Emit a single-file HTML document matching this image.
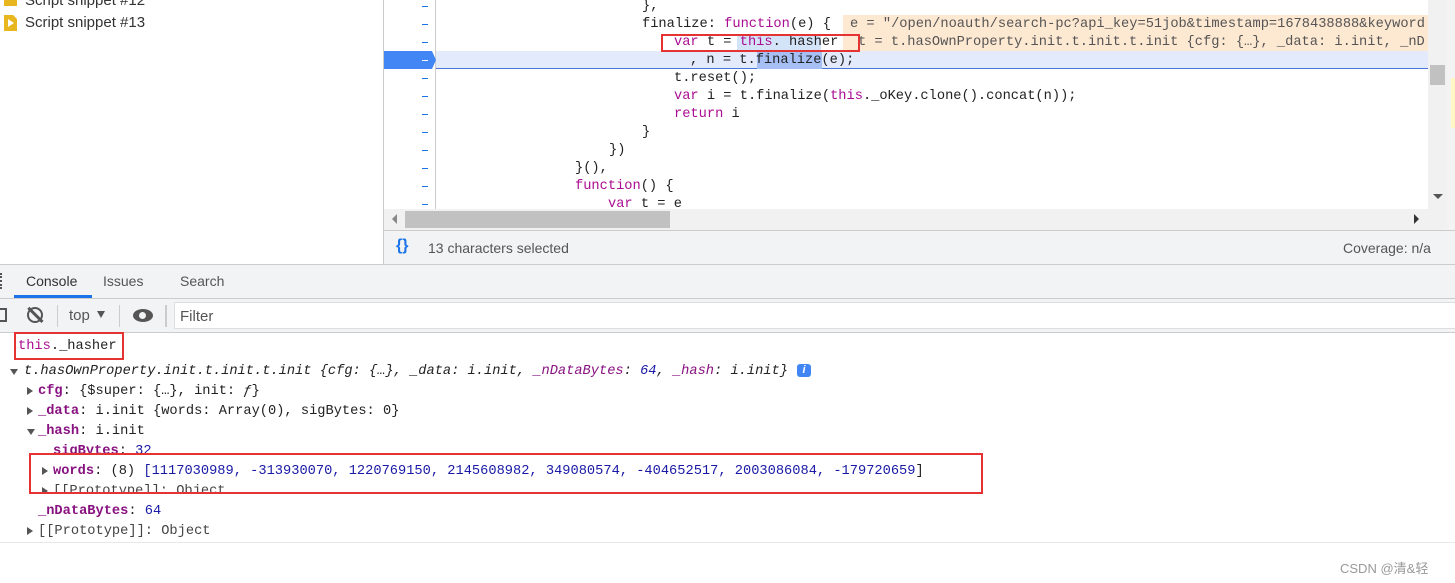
<!DOCTYPE html>
<html><head><meta charset="utf-8"><style>
*{margin:0;padding:0;box-sizing:border-box}
body{width:1455px;height:583px;position:relative;overflow:hidden;background:#fff;font-family:"Liberation Sans",sans-serif}
.a{position:absolute;white-space:pre}
.m{font-family:"Liberation Mono",monospace;font-size:13.7px;line-height:18px}
.k{color:#aa0d91}.b{color:#1a1aa6}.pk{color:#881280;font-weight:bold}.g{color:#555}
.d{position:absolute;left:422px;width:6px;height:1px;background:#1a73e8}
.c{font-family:"Liberation Mono",monospace;font-size:13.7px;line-height:20px;color:#222}
.tri{position:absolute;width:0;height:0;border-left:6px solid #555;border-top:4px solid transparent;border-bottom:4px solid transparent}
.trd{position:absolute;width:0;height:0;border-top:6px solid #555;border-left:4px solid transparent;border-right:4px solid transparent}
.box{position:absolute;border:2px solid #e53333}
</style></head><body>
<div class="a" style="left:4px;top:-9px;width:13px;height:15px;background:#e8b720"></div>
<div class="a" style="left:25px;top:-8px;font-size:15px;color:#333">Script snippet #12</div>
<div class="a" style="left:4px;top:15px;width:13px;height:16px;background:#e8b720;clip-path:polygon(0 0,70% 0,100% 25%,100% 100%,0 100%)"></div>
<div class="a" style="left:8px;top:19px;width:0;height:0;border-left:6px solid #fff;border-top:4px solid transparent;border-bottom:4px solid transparent"></div>
<div class="a" style="left:25px;top:14px;font-size:15px;color:#333">Script snippet #13</div>
<div class="a" style="left:383px;top:0;width:1px;height:264px;background:#ccc"></div>
<div class="a" style="left:435px;top:0;width:1px;height:210px;background:#ccc"></div>
<div class="d" style="top:6px"></div><div class="d" style="top:24px"></div><div class="d" style="top:42px"></div>
<div class="d" style="top:78px"></div><div class="d" style="top:96px"></div><div class="d" style="top:114px"></div><div class="d" style="top:132px"></div><div class="d" style="top:150px"></div><div class="d" style="top:168px"></div><div class="d" style="top:186px"></div><div class="d" style="top:204px"></div>
<div class="a" style="left:436px;top:51px;width:992px;height:18px;background:#e3eafc;border-bottom:1px solid #4876d6"></div>
<div class="a" style="left:384px;top:51px;width:52px;height:18px;background:#4285f4;clip-path:polygon(0 0,48px 0,52px 9px,48px 18px,0 18px)"></div>
<div class="a" style="left:422px;top:60px;width:6px;height:1px;background:#fff"></div>
<div class="a" style="left:843px;top:15px;width:585px;height:36px;background:#fde8d2"></div>
<div class="a" style="left:737px;top:34px;width:84px;height:16px;background:#d4e4f8"></div>
<div class="a" style="left:757px;top:52px;width:65px;height:17px;background:#a6bff5"></div>
<div class="a m" style="left:642px;top:-2px;color:#222">},</div>
<div class="a m" style="left:642px;top:16px;color:#222">finalize: <span class="k">function</span>(e) {</div>
<div class="a m" style="left:850px;top:16px;color:#555">e = "/open/noauth/search-pc?api_key=51job&amp;timestamp=1678438888&amp;keyword</div>
<div class="a m" style="left:674px;top:34px;color:#222"><span class="k">var</span> t = <span class="k">this</span>. hasher</div>
<div class="a m" style="left:858px;top:34px;color:#555">t = t.hasOwnProperty.init.t.init.t.init {cfg: {…}, _data: i.init, _nD</div>
<div class="a m" style="left:690px;top:52px;color:#222">, n = t.finalize(e);</div>
<div class="a m" style="left:674px;top:70px;color:#222">t.reset();</div>
<div class="a m" style="left:674px;top:88px;color:#222"><span class="k">var</span> i = t.finalize(<span class="k">this</span>._oKey.clone().concat(n));</div>
<div class="a m" style="left:674px;top:106px;color:#222"><span class="k">return</span> i</div>
<div class="a m" style="left:642px;top:124px;color:#222">}</div>
<div class="a m" style="left:609px;top:142px;color:#222">})</div>
<div class="a m" style="left:575px;top:160px;color:#222">}(),</div>
<div class="a m" style="left:575px;top:178px;color:#222"><span class="k">function</span>() {</div>
<div class="a m" style="left:608px;top:196px;color:#222"><span class="k">var</span> t = e</div>
<div class="box" style="left:661px;top:34px;width:199px;height:18px"></div>
<div class="a" style="left:1428px;top:0;width:19px;height:210px;background:#f1f1f1"></div>
<div class="a" style="left:1430px;top:65px;width:15px;height:20px;background:#c1c1c1"></div>
<div class="a" style="left:1433px;top:194px;width:0;height:0;border-top:5px solid #555;border-left:5px solid transparent;border-right:5px solid transparent"></div>
<div class="a" style="left:1447px;top:0;width:8px;height:264px;background:#f3f3f3"></div>
<div class="a" style="left:1451px;top:78px;width:4px;height:50px;background:#fff8c5"></div>
<div class="a" style="left:384px;top:209px;width:1063px;height:21px;background:#f1f1f1"></div>
<div class="a" style="left:405px;top:211px;width:265px;height:17px;background:#c1c1c1"></div>
<div class="a" style="left:392px;top:214px;width:0;height:0;border-right:5px solid #888;border-top:5px solid transparent;border-bottom:5px solid transparent"></div>
<div class="a" style="left:1414px;top:214px;width:0;height:0;border-left:5px solid #333;border-top:5px solid transparent;border-bottom:5px solid transparent"></div>
<div class="a" style="left:384px;top:230px;width:1071px;height:34px;background:#f1f3f4;border-top:1px solid #ccc"></div>
<div class="a" style="left:396px;top:237px;font-size:16px;font-weight:bold;color:#1a73e8">{}</div>
<div class="a" style="left:428px;top:240px;font-size:14px;color:#555">13 characters selected</div>
<div class="a" style="left:1343px;top:240px;font-size:14px;color:#555">Coverage: n/a</div>
<div class="a" style="left:0;top:264px;width:1455px;height:35px;background:#f1f3f4;border-top:1px solid #ccc;border-bottom:1px solid #ccc"></div>
<div class="a" style="left:0;top:273px;width:2px;height:16px;border-left:2px dotted #555"></div>
<div class="a" style="left:26px;top:273px;font-size:14px;color:#333">Console</div>
<div class="a" style="left:14px;top:295px;width:78px;height:3px;background:#1a73e8"></div>
<div class="a" style="left:103px;top:273px;font-size:14px;color:#555">Issues</div>
<div class="a" style="left:180px;top:273px;font-size:14px;color:#555">Search</div>
<div class="a" style="left:0;top:299px;width:1455px;height:34px;background:#f1f3f4;border-bottom:1px solid #ccc"></div>
<div class="a" style="left:-4px;top:308px;width:11px;height:14px;border:2px solid #555"></div>
<div class="a" style="left:27px;top:307px;width:16px;height:16px;border:2.5px solid #555;border-radius:50%"></div>
<div class="a" style="left:34px;top:305px;width:2.5px;height:20px;background:#555;transform:rotate(-45deg)"></div>
<div class="a" style="left:57px;top:305px;width:1px;height:22px;background:#ccc"></div>
<div class="a" style="left:69px;top:307px;font-size:15px;color:#555">top</div>
<div class="a" style="left:97px;top:311px;width:0;height:0;border-top:7px solid #555;border-left:4px solid transparent;border-right:4px solid transparent"></div>
<div class="a" style="left:119px;top:305px;width:1px;height:22px;background:#ccc"></div>
<div class="a" style="left:133px;top:309px;width:20px;height:13px;background:#555;border-radius:50%"></div>
<div class="a" style="left:139px;top:312px;width:7px;height:7px;background:#f1f3f4;border-radius:50%"></div>
<div class="a" style="left:165px;top:305px;width:2px;height:22px;background:#ccc"></div>
<div class="a" style="left:174px;top:302px;width:1290px;height:27px;background:#fff;border:1px solid #ddd"></div>
<div class="a" style="left:180px;top:308px;font-size:15px;color:#555">Filter</div>
<div class="a c" style="left:18px;top:337px"><span class="k">this</span>._hasher</div>
<div class="box" style="left:14px;top:332px;width:110px;height:28px"></div>
<div class="trd" style="left:10px;top:369px"></div>
<div class="a c" style="left:24px;top:362px;font-style:italic">t.hasOwnProperty.init.t.init.t.init {cfg: {…}, _data: i.init, <span style="color:#881280">_nDataBytes</span>: <span class="b">64</span>, <span style="color:#881280">_hash</span>: i.init}</div>
<div class="a" style="left:797px;top:364px;width:14px;height:13px;background:#4285f4;border-radius:3px;color:#fff;font-size:11px;font-style:italic;font-weight:bold;text-align:center;line-height:13px">i</div>
<div class="tri" style="left:27px;top:387px"></div>
<div class="a c" style="left:38px;top:382px"><span class="pk">cfg</span>: {$super: {…}, init: <i>ƒ</i>}</div>
<div class="tri" style="left:27px;top:407px"></div>
<div class="a c" style="left:38px;top:402px"><span class="pk">_data</span>: i.init {words: Array(0), sigBytes: 0}</div>
<div class="trd" style="left:27px;top:429px"></div>
<div class="a c" style="left:38px;top:422px"><span class="pk">_hash</span>: i.init</div>
<div class="a c" style="left:53px;top:442px"><span class="pk">sigBytes</span>: <span class="b">32</span></div>
<div class="a" style="left:0;top:454px;width:1455px;height:9px;background:#fff"></div>
<div class="tri" style="left:42px;top:467px"></div>
<div class="a c" style="left:53px;top:462px"><span class="pk">words</span>: (8) <span class="b">[1117030989, -313930070, 1220769150, 2145608982, 349080574, -404652517, 2003086084, -179720659</span>]</div>
<div class="tri" style="left:42px;top:487px"></div>
<div class="a c" style="left:53px;top:482px;color:#444">[[Prototype]]: Object</div>
<div class="a" style="left:0;top:494px;width:1455px;height:8px;background:#fff"></div>
<div class="box" style="left:29px;top:453px;width:954px;height:41px"></div>
<div class="a c" style="left:38px;top:502px"><span class="pk">_nDataBytes</span>: <span class="b">64</span></div>
<div class="tri" style="left:27px;top:527px"></div>
<div class="a c" style="left:38px;top:522px;color:#444">[[Prototype]]: Object</div>
<div class="a" style="left:0;top:542px;width:1455px;height:1px;background:#e8e8e8"></div>
<div class="a" style="left:1340px;top:558px;font-size:13px;color:#999;font-family:'Liberation Sans','Noto Sans CJK SC',sans-serif">CSDN @清&amp;轻</div>
</body></html>
